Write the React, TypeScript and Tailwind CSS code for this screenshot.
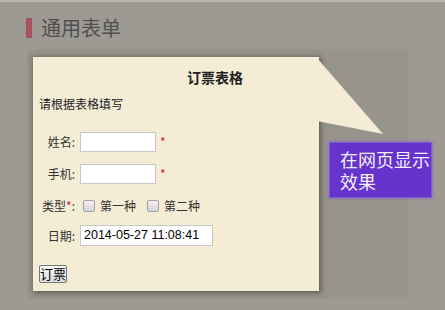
import React from "react";

const cjk = { fontFamily: '"Noto Sans CJK SC", "Noto Sans", sans-serif' };

function Checkbox() {
  return (
    <span className="inline-block w-[12px] h-[12px] rounded-[2px] border border-[#a0a0a0] bg-gradient-to-b from-[#f4f4f4] to-[#d2d2d2] shadow-[inset_0_0_1px_#fff]" />
  );
}

export default function App() {
  return (
    <div
      className="w-[445px] h-[310px] overflow-hidden bg-[#9d9a93] border-t-2 border-[#b9b5ae] text-[#333]"
      style={cjk}
    >
      <div className="flex items-center pl-[26px] pt-[15px] h-[37px]">
        <div className="w-[6px] h-[20px] bg-[#a4535f]" />
        <div className="ml-[9px] text-[20px] leading-[24px] text-[#505050]">通用表单</div>
      </div>

      <div className="relative ml-[27px] mt-[10px] w-[381px] h-[250px] bg-[#97948c] pt-[8px] pl-[6px]">
        <div className="w-[286px] h-[234px] bg-[#f5ecd6] shadow-[1px_1px_5px_1px_rgba(60,55,45,0.6)] pl-[6px] flex flex-col text-[12px]">
          <div className="mt-[10px] h-[20px] leading-[20px] pl-[148px] text-[14px] font-bold text-[#222]">订票表格</div>
          <div className="mt-[9px] h-[16px] leading-[16px] text-[#222]">请根据表格填写</div>

          <div className="mt-[20px] flex items-center h-[20px]">
            <div className="w-[36px] text-right">姓名:</div>
            <div className="ml-[5px] w-[76px] h-[20px] bg-white border border-[#c8c8c8]" />
            <span className="ml-[4px] text-[#cc2222]">*</span>
          </div>

          <div className="mt-[12px] flex items-center h-[20px]">
            <div className="w-[36px] text-right">手机:</div>
            <div className="ml-[5px] w-[76px] h-[20px] bg-white border border-[#c8c8c8]" />
            <span className="ml-[4px] text-[#cc2222]">*</span>
          </div>

          <div className="mt-[12px] flex items-center h-[20px]">
            <div className="w-[36px] text-right">
              类型<span className="text-[#cc2222]">*</span>:
            </div>
            <div className="ml-[8px] flex items-center">
              <Checkbox />
              <span className="ml-[5px]">第一种</span>
              <span className="ml-[11px] flex items-center">
                <Checkbox />
              </span>
              <span className="ml-[5px]">第二种</span>
            </div>
          </div>

          <div className="mt-[9px] flex items-center h-[21px]">
            <div className="w-[36px] text-right">日期:</div>
            <div
              className="ml-[5px] w-[133px] h-[21px] bg-white border border-[#c8c8c8] pl-[3px] text-[12.5px] leading-[19px] text-black"
              style={{ fontFamily: '"Liberation Sans", Arial, sans-serif' }}
            >
              2014-05-27 11:08:41
            </div>
          </div>

          <div className="mt-[19px]">
            <div className="inline-flex items-center justify-center w-[28px] h-[18px] border border-[#767676] rounded-[2px] bg-gradient-to-b from-[#f6f6f6] to-[#dddddd] text-[13px] leading-[16px] text-black">
              订票
            </div>
          </div>
        </div>

        <svg
          className="absolute left-0 top-0 pointer-events-none"
          width="381"
          height="250"
          viewBox="0 0 381 250"
        >
          <polygon points="290,9 356,85 290,72" fill="#f5ecd6" />
        </svg>

        <div className="absolute left-[302px] top-[93px] w-[103px] h-[56px] bg-[#6633cc] border border-[#7f5fd0] shadow-[0_0_3px_#7b5ccc] pl-[10px] pt-[5px] text-[18px] text-[#f2eefa]">
          <div className="h-[22px] leading-[22px]">在网页显示</div>
          <div className="h-[22px] leading-[22px]">效果</div>
        </div>
      </div>
    </div>
  );
}
